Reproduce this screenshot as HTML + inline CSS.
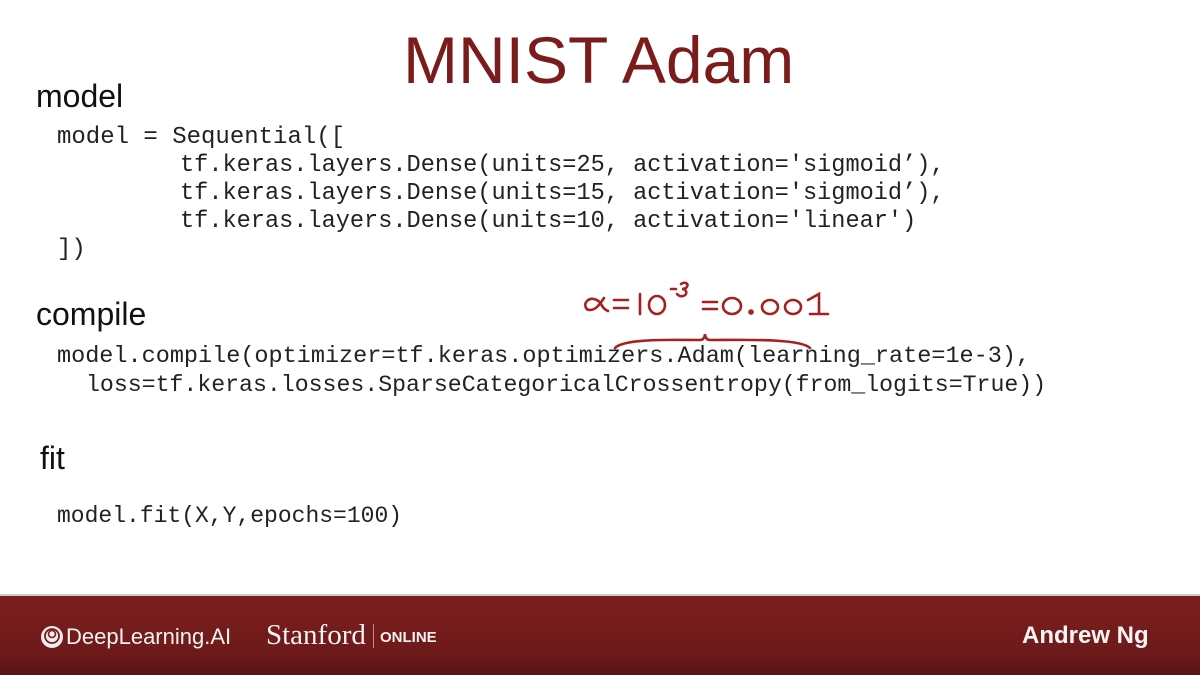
<!DOCTYPE html>
<html><head><style>
body{margin:0;width:1200px;height:675px;background:#fff;position:relative;overflow:hidden;font-family:"Liberation Sans",sans-serif}
.a{position:absolute;white-space:pre}
.h{font-size:32px;color:#111}
.c{font-family:"Liberation Mono",monospace;font-size:23px;color:#222;line-height:28px}
</style></head><body>
<div class="a" style="left:403px;top:22px;font-size:66px;color:#7b1c1c">MNIST Adam</div>
<div class="a h" style="left:36px;top:78px">model</div>
<div class="a c" style="left:57px;top:124px;font-size:24px">model = Sequential([</div>
<div class="a c" style="left:180px;top:152px;font-size:23.6px">tf.keras.layers.Dense(units=25, activation='sigmoid’),
tf.keras.layers.Dense(units=15, activation='sigmoid’),
tf.keras.layers.Dense(units=10, activation='linear')</div>
<div class="a c" style="left:57px;top:236px;font-size:24px">])</div>
<div class="a h" style="left:36px;top:296px">compile</div>
<div class="a c" style="left:57px;top:343px;font-size:23.5px">model.compile(optimizer=tf.keras.optimizers.Adam(learning_rate=1e-3),</div>
<div class="a c" style="left:86px;top:371px;font-size:23.2px">loss=tf.keras.losses.SparseCategoricalCrossentropy(from_logits=True))</div>
<div class="a h" style="left:40px;top:440px">fit</div>
<div class="a c" style="left:57px;top:502px">model.fit(X,Y,epochs=100)</div>
<svg class="a" style="left:560px;top:270px" width="300" height="90" viewBox="0 0 300 90">
<g fill="none" stroke="#a52020" stroke-width="2.6" stroke-linecap="round">
<path d="M44 28c-4 6-8 12-14 12-5 0-6-6-3-9 4-4 11-2 14 3 2 4 4 6 7 7"/>
<path d="M54 30h14M54 38h14"/>
<line x1="80" y1="24" x2="80" y2="44"/>
<ellipse cx="97" cy="35" rx="8" ry="9"/>
<path d="M111 19h5M121 14c4-3 9 0 5 4-2 1-3 1-4 1 5 0 6 6 1 7-3 1-5-1-6-2"/>
<path d="M143 32h14M143 39h14"/>
<ellipse cx="172" cy="36" rx="9" ry="8"/>
<circle cx="191" cy="42" r="1.5"/>
<ellipse cx="210" cy="37" rx="8" ry="7"/>
<ellipse cx="233" cy="37" rx="8" ry="7"/>
<path d="M248 30l11-6v20M250 44h18"/>
<path d="M55 78c10-10 60-8 85-8 5 0 5-6 5-6 0 0 0 6 5 6 30 0 90-2 100 8"/>
</g></svg>
<div class="a" style="left:0;top:596px;width:1200px;height:79px;background:linear-gradient(#7d1e1e,#6e1a1a 70%,#5a1515)"></div>
<div class="a" style="left:0;top:594px;width:1200px;height:2px;background:#ccc"></div>
<svg class="a" style="left:40px;top:625px" width="24" height="24" viewBox="0 0 24 24"><circle cx="12" cy="12" r="11" fill="#eee"/><circle cx="12" cy="11" r="7" fill="none" stroke="#7a1c1c" stroke-width="1.8"/><circle cx="12" cy="9" r="3.5" fill="none" stroke="#7a1c1c" stroke-width="1.6"/></svg>
<div class="a" style="left:66px;top:624px;font-size:22px;color:#f2f2f2">DeepLearning.AI</div>
<div class="a" style="left:266px;top:619px;font-size:29px;color:#f2f2f2;font-family:'Liberation Serif',serif">Stanford</div>
<div class="a" style="left:373px;top:624px;width:1px;height:24px;background:#c88"></div>
<div class="a" style="left:380px;top:629px;font-size:15px;color:#f2f2f2;font-weight:bold">ONLINE</div>
<div class="a" style="left:1022px;top:622px;font-size:24px;color:#f5f5f5;font-weight:bold">Andrew Ng</div>
</body></html>
